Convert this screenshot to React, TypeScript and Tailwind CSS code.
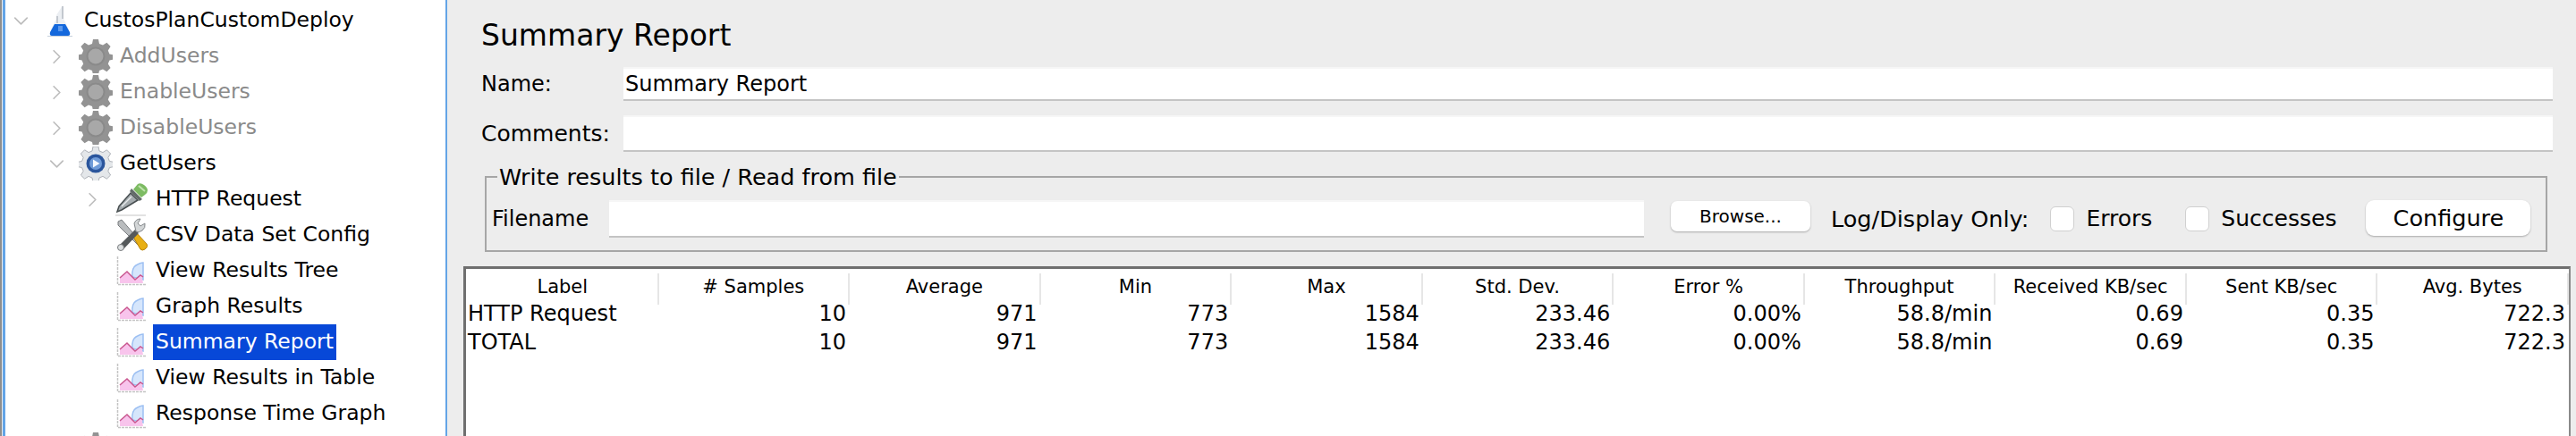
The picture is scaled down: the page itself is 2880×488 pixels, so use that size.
import { ChevronDown, ChevronRight } from "lucide-react";

type TreeNode = {
  label: string;
  depth: number;
  icon: "flask" | "gear" | "gearOff" | "dropper" | "tools" | "chart";
  toggle?: "open" | "closed";
  disabled?: boolean;
  selected?: boolean;
};

const nodes: TreeNode[] = [
  { label: "CustosPlanCustomDeploy", depth: 0, icon: "flask", toggle: "open" },
  { label: "AddUsers", depth: 1, icon: "gearOff", toggle: "closed", disabled: true },
  { label: "EnableUsers", depth: 1, icon: "gearOff", toggle: "closed", disabled: true },
  { label: "DisableUsers", depth: 1, icon: "gearOff", toggle: "closed", disabled: true },
  { label: "GetUsers", depth: 1, icon: "gear", toggle: "open" },
  { label: "HTTP Request", depth: 2, icon: "dropper", toggle: "closed" },
  { label: "CSV Data Set Config", depth: 2, icon: "tools" },
  { label: "View Results Tree", depth: 2, icon: "chart" },
  { label: "Graph Results", depth: 2, icon: "chart" },
  { label: "Summary Report", depth: 2, icon: "chart", selected: true },
  { label: "View Results in Table", depth: 2, icon: "chart" },
  { label: "Response Time Graph", depth: 2, icon: "chart" },
  { label: "", depth: 1, icon: "gearOff" },
];

const columns = [
  "Label",
  "# Samples",
  "Average",
  "Min",
  "Max",
  "Std. Dev.",
  "Error %",
  "Throughput",
  "Received KB/sec",
  "Sent KB/sec",
  "Avg. Bytes",
];

const rows = [
  ["HTTP Request", "10", "971", "773", "1584", "233.46", "0.00%", "58.8/min", "0.69", "0.35", "722.3"],
  ["TOTAL", "10", "971", "773", "1584", "233.46", "0.00%", "58.8/min", "0.69", "0.35", "722.3"],
];

const gearPath =
  "M16 0h6l1 5 4 1.600 4.400-2.800 4.200 4.200-2.800 4.400 1.600 4 4.600 1v5.200l-4.600 1-1.600 4 2.800 4.400-4.200 4.200-4.400-2.800-4 1.600-1 4.800h-6l-1-4.800-4-1.600-4.400 2.800-4.200-4.200 2.800-4.400-1.600-4-4.600-1v-5.200l4.600-1 1.600-4-2.800-4.400 4.200-4.200 4.400 2.800 4-1.600z";

function GearIcon({ active }: { active: boolean }) {
  return (
    <svg viewBox="0 0 38 38" className="h-[38px] w-[38px]">
      <path d={gearPath} fill={active ? "#e4e7ea" : "#939393"} stroke={active ? "#aeb2b8" : "none"} />
      {active ? (
        <>
          <circle cx="19" cy="19" r="10.500" fill="#2a559c" />
          <circle cx="19" cy="19" r="7" fill="#6f9bd8" />
          <path d="M16 14.500l7.500 4.500-7.500 4.500z" fill="#f4f8ff" />
        </>
      ) : (
        <circle cx="19" cy="19" r="9.500" fill="#a8a8a8" stroke="#8a8a8a" strokeWidth="2" />
      )}
    </svg>
  );
}

function FlaskIcon() {
  return (
    <svg viewBox="0 0 28 36" className="h-[36px] w-[28px]">
      <path d="M10 12l7-11v13l7 14v6H4v-6l6-12z" fill="#eceff3" />
      <path d="M11 13v8M17 2v14" stroke="#c3c8cf" strokeWidth="2" />
      <path d="M8 22h12l5 9q1 4-2 4H5q-3 0-2-4z" fill="#1468dc" />
      <path d="M12 24h5v6h-5z" fill="#5b98ec" />
      <path d="M0 35.500h28" stroke="#c6d0dc" />
    </svg>
  );
}

function DropperIcon() {
  return (
    <svg viewBox="0 0 38 38" className="h-[38px] w-[38px]">
      <path d="M26 2q3-2 7 1t4 6q0 3-3 5l-4 3-9-9z" fill="#7dbb63" />
      <path d="M27 4l7 6" stroke="#c0e3ae" strokeWidth="2" />
      <path d="M19 7l12 12-3 2-11-11z" fill="#616b68" />
      <path d="M18 12l8 8L8 31l-5 2 2-6z" fill="#a4abae" stroke="#484f51" strokeWidth="1.500" />
      <path d="M8 27l11-11" stroke="#e6e9ea" strokeWidth="1.500" />
      <path d="M1 37h34" stroke="#d8d8d8" strokeWidth="1.500" />
    </svg>
  );
}

function ToolsIcon() {
  return (
    <svg viewBox="0 0 36 38" className="h-[38px] w-[36px]">
      <path d="M3 4l4-2 25 29-3 3L3 8z" fill="#b9bcbe" stroke="#7a7d80" strokeWidth="1" />
      <path d="M20 21l4-4 11 12q2 3-1 5l-1 1q-3 2-5 0z" fill="#e8af14" stroke="#b78207" />
      <path d="M5 30L22 13l4 4L9 35z" fill="#55595b" />
      <path d="M21 6q2-5 7-5l-3 5 3 3 5-3q1 5-3 8t-7 1z" fill="#d3d6d7" stroke="#85898c" />
      <circle cx="6" cy="33" r="3.500" fill="#dcdfe0" stroke="#7a7d80" />
    </svg>
  );
}

function ChartIcon() {
  return (
    <svg viewBox="0 0 34 34" className="h-[34px] w-[34px]">
      <path d="M1.500 1v31.500H33" fill="none" stroke="#c4c4c4" strokeWidth="1.500" strokeDasharray="3 1" />
      <path d="M18 24q-1-10 4-13t8-3v19z" fill="#d6e6fc" stroke="#9dc0f2" strokeWidth="1.500" />
      <path d="M4 31v-6l8-7 9 9 7-6 2 10z" fill="#f8c4ec" />
      <path d="M4 25l8-7 9 9 6-5 3 2" fill="none" stroke="#c9568f" strokeWidth="1.500" />
    </svg>
  );
}

function NodeIcon({ icon }: { icon: TreeNode["icon"] }) {
  if (icon === "flask") return <FlaskIcon />;
  if (icon === "gear") return <GearIcon active />;
  if (icon === "gearOff") return <GearIcon active={false} />;
  if (icon === "dropper") return <DropperIcon />;
  if (icon === "tools") return <ToolsIcon />;
  return <ChartIcon />;
}

function TreeRow({ node }: { node: TreeNode }) {
  return (
    <div
      className="flex h-[40px] items-center"
      style={{ paddingLeft: 15 + node.depth * 40 }}
    >
      <span className="flex w-[16px] justify-center text-[#bdbdbd]">
        {node.toggle === "open" && <ChevronDown size={27} strokeWidth={1.5} className="shrink-0" />}
        {node.toggle === "closed" && <ChevronRight size={27} strokeWidth={1.5} className="shrink-0" />}
      </span>
      <span className="ml-[17px] flex w-[38px] justify-center">
        <NodeIcon icon={node.icon} />
      </span>
      <span
        className={
          node.selected
            ? "ml-[5px] flex h-[40px] items-center bg-[#0748d8] px-[3px] text-white"
            : node.disabled
              ? "ml-[8px] text-[#8a8a8a]"
              : "ml-[8px] text-black"
        }
      >
        {node.label}
      </span>
    </div>
  );
}

function TextField({ value, className }: { value?: string; className: string }) {
  return (
    <div
      className={`flex items-center border-t-2 border-b-2 border-t-[#f6f6f6] border-b-[#c4c4c4] bg-white pl-[2px] ${className}`}
    >
      {value}
    </div>
  );
}

function CheckBox({ label }: { label: string }) {
  return (
    <div className="flex items-center gap-[13px] text-[25px]">
      <span className="h-[28px] w-[27px] rounded-[6px] border border-[#d0d0d0] bg-white" />
      <span>{label}</span>
    </div>
  );
}

export default function App() {
  return (
    <div className="flex h-[488px] w-[2880px] overflow-hidden bg-[#ededed] font-['DejaVu_Sans',sans-serif] text-[24px] text-black">
      <div className="h-full w-[2px] shrink-0 bg-[#8e8e8e]" />
      <aside className="ml-[1px] h-full w-[497px] shrink-0 overflow-hidden border-l-[3px] border-r-[2px] border-x-[#63a4e6] bg-white pt-[3px] text-[23.500px]">
        <div className="-ml-[6px]">
          {nodes.map((node, i) => (
            <TreeRow key={i} node={node} />
          ))}
        </div>
      </aside>

      <main className="flex min-w-0 flex-1 flex-col pl-[18px] pr-[6px]">
        <div className="pl-[20px]">
          <h1 className="flex h-[75px] items-center pt-[5px] text-[33px] font-normal">Summary Report</h1>

          <div className="flex h-[38px] items-center">
            <span className="w-[159px]">Name:</span>
            <TextField value="Summary Report" className="mr-[20px] h-[38px] flex-1" />
          </div>
          <div className="mt-[16px] flex h-[41px] items-center">
            <span className="w-[159px] text-[25px]">Comments:</span>
            <TextField className="mr-[20px] h-[41px] flex-1" />
          </div>
        </div>

        {/* group box with the legend sitting on its top line */}
        <fieldset className="mb-[16px] ml-[24px] mr-[26px] mt-[16px] h-[96px] border-2 border-[#a6a6a6] px-[6px] text-[25.500px]">
          <legend className="ml-[6px] px-[2px] leading-[24px]">Write results to file / Read from file</legend>
          <div className="mt-[14px] flex items-center">
            <span className="w-[131px] text-[24px]">Filename</span>
            <TextField className="h-[42px] w-[1157px]" />
            <button className="ml-[30px] h-[34px] w-[156px] -translate-y-[3px] rounded-[7px] bg-white text-[20px] shadow-[0_1px_2px_#aaa]">
              Browse...
            </button>
            <span className="ml-[23px]">Log/Display Only:</span>
            <div className="ml-[24px]">
              <CheckBox label="Errors" />
            </div>
            <div className="ml-[37px]">
              <CheckBox label="Successes" />
            </div>
            <button className="ml-[33px] h-[40px] w-[184px] -translate-y-[1px] rounded-[9px] bg-white shadow-[0_1px_2px_#aaa]">
              Configure
            </button>
          </div>
        </fieldset>

        <section className="flex-1 border-l-[3px] border-r-2 border-t-[3px] border-[#6f6f6f] border-r-[#8a8a8a] bg-white pl-[2px] text-[24px]">
          <div className="mt-[5px] grid h-[22px] grid-cols-11 text-[21px]">
            {columns.map((col) => (
              <div key={col} className="flex items-center justify-center border-r-2 border-[#e6e6e6] pb-[3px]">
                {col}
              </div>
            ))}
          </div>
          <div className="mt-[5px]">
            {rows.map((row) => (
              <div key={row[0]} className="grid h-[32px] grid-cols-11 items-center">
                {row.map((cell, i) => (
                  <div key={i} className={i === 0 ? "pl-0" : "pr-[4px] text-right"}>
                    {cell}
                  </div>
                ))}
              </div>
            ))}
          </div>
        </section>
      </main>
    </div>
  );
}
